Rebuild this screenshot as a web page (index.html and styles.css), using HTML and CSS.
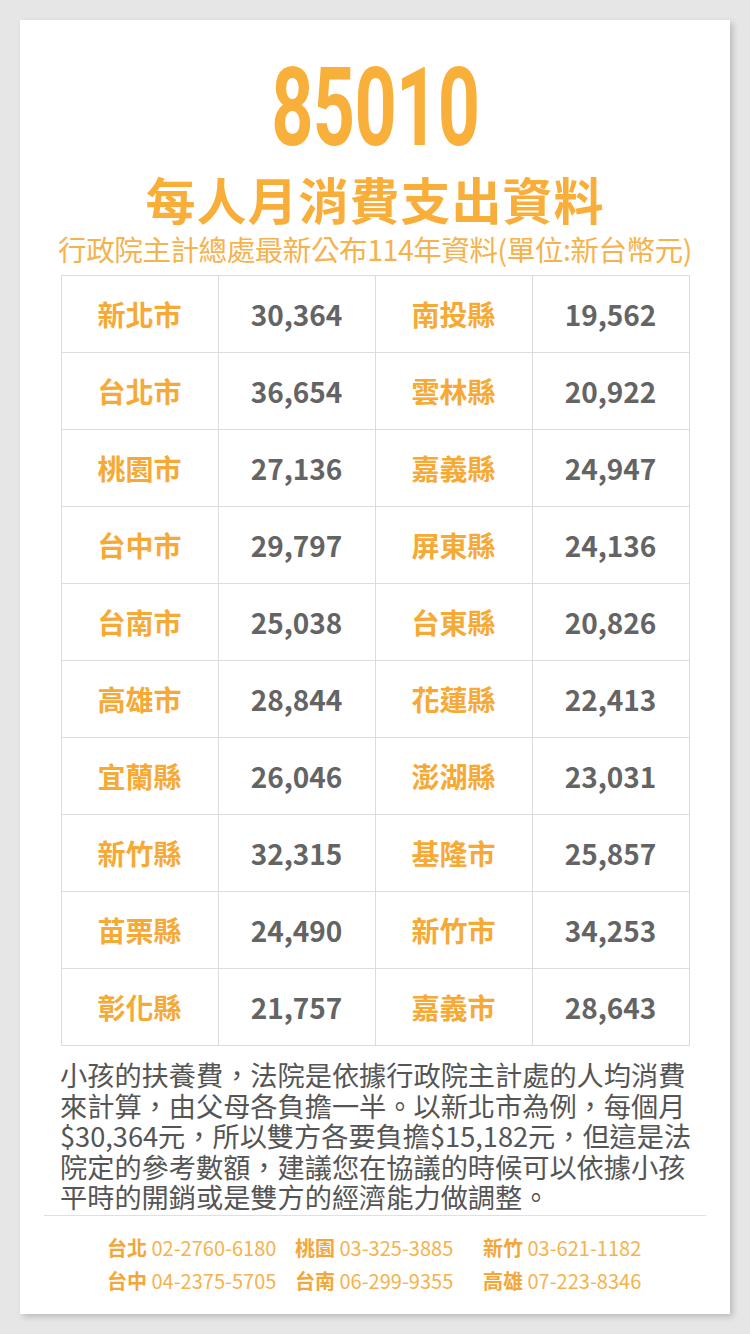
FILE: index.html
```html
<!DOCTYPE html>
<html lang="zh-Hant">
<head>
<meta charset="utf-8">
<link rel="stylesheet" href="styles.css">
</head>
<body>
<div class="page">
  <div class="card">
    <header class="head">
      <div class="code"><span class="code-inner">85010</span></div>
      <h1 class="title">每人月消費支出資料</h1>
      <p class="subtitle">行政院主計總處最新公布114年資料(單位:新台幣元)</p>
    </header>
    <div class="table">
      <div class="cell name">新北市</div><div class="cell num">30,364</div><div class="cell name">南投縣</div><div class="cell num">19,562</div>
      <div class="cell name">台北市</div><div class="cell num">36,654</div><div class="cell name">雲林縣</div><div class="cell num">20,922</div>
      <div class="cell name">桃園市</div><div class="cell num">27,136</div><div class="cell name">嘉義縣</div><div class="cell num">24,947</div>
      <div class="cell name">台中市</div><div class="cell num">29,797</div><div class="cell name">屏東縣</div><div class="cell num">24,136</div>
      <div class="cell name">台南市</div><div class="cell num">25,038</div><div class="cell name">台東縣</div><div class="cell num">20,826</div>
      <div class="cell name">高雄市</div><div class="cell num">28,844</div><div class="cell name">花蓮縣</div><div class="cell num">22,413</div>
      <div class="cell name">宜蘭縣</div><div class="cell num">26,046</div><div class="cell name">澎湖縣</div><div class="cell num">23,031</div>
      <div class="cell name">新竹縣</div><div class="cell num">32,315</div><div class="cell name">基隆市</div><div class="cell num">25,857</div>
      <div class="cell name">苗栗縣</div><div class="cell num">24,490</div><div class="cell name">新竹市</div><div class="cell num">34,253</div>
      <div class="cell name">彰化縣</div><div class="cell num">21,757</div><div class="cell name">嘉義市</div><div class="cell num">28,643</div>
    </div>
    <p class="note">小孩的扶養費，法院是依據行政院主計處的人均消費<br>來計算，由父母各負擔一半。以新北市為例，每個月<br>$30,364元，所以雙方各要負擔$15,182元，但這是法<br>院定的參考數額，建議您在協議的時候可以依據小孩<br>平時的開銷或是雙方的經濟能力做調整。</p>
    <div class="divider"></div>
    <div class="contacts">
      <div class="contact"><b>台北</b> 02-2760-6180</div>
      <div class="contact"><b>桃園</b> 03-325-3885</div>
      <div class="contact"><b>新竹</b> 03-621-1182</div>
      <div class="contact"><b>台中</b> 04-2375-5705</div>
      <div class="contact"><b>台南</b> 06-299-9355</div>
      <div class="contact"><b>高雄</b> 07-223-8346</div>
    </div>
  </div>
</div>
</body>
</html>
```

FILE: styles.css
```css
* { box-sizing: border-box; }
html, body { margin: 0; padding: 0; }
body {
  background: #e6e6e6;
  font-family: "Noto Sans CJK TC", "Noto Sans", sans-serif;
  width: 750px;
  height: 1334px;
  overflow: hidden;
}
.page { padding: 20px; }
.card {
  width: 710px;
  height: 1294px;
  background: #fff;
  box-shadow: 3px 3px 6px rgba(0,0,0,0.18);
  display: flex;
  flex-direction: column;
  align-items: center;
}
.head { display: flex; flex-direction: column; align-items: center; }
.code {
  margin-top: 18px;
  height: 140px;
  line-height: 140px;
  font-family: Roboto, sans-serif;
  font-weight: 700;
  font-size: 110px;
  color: #f9b03b;
}
.code-inner { display: inline-block; transform: scaleX(0.67); letter-spacing: -1px; }
.title {
  margin: -10px 0 0;
  font-size: 50px;
  line-height: 60px;
  font-weight: 700;
  color: #f8ae39;
  letter-spacing: 1px;
}
.subtitle {
  margin: 2px 0 0;
  font-size: 28.6px;
  line-height: 38px;
  font-weight: 400;
  color: #f6b24c;
  letter-spacing: -0.5px;
}
.table {
  margin-top: 7px;
  display: grid;
  grid-template-columns: repeat(4, 157px);
  grid-auto-rows: 77px;
  border-top: 1px solid #dcdcdc;
  border-left: 1px solid #dcdcdc;
}
.cell {
  display: flex;
  align-items: center;
  justify-content: center;
  border-right: 1.5px solid #dcdcdc;
  border-bottom: 1.5px solid #dcdcdc;
  font-size: 28px;
  font-weight: 700;
}
.name { color: #f6a934; }
.num { color: #646464; }
.note {
  align-self: stretch;
  margin: 13px 0 0 40px;
  font-size: 27.2px;
  line-height: 30.5px;
  color: #555;
}
.divider {
  align-self: stretch;
  margin: 3px 24px 0;
  height: 1px;
  background: #e0e0e0;
}
.contacts {
  margin-top: 18px;
  display: grid;
  grid-template-columns: 188px 188px 170px;
  row-gap: 5px;
  font-size: 20px;
  line-height: 28px;
  color: #f6b24c;
  margin-left: 10px;
}
.contact b { font-weight: 700; color: #f3a73a; }
```
